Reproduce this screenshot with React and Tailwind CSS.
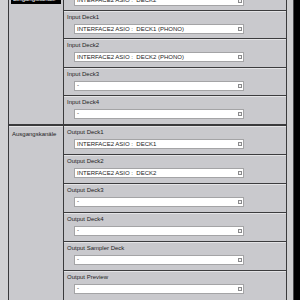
export default function App() {
  const inputRows = [
    { label: "Input Deck0", value: "INTERFACE2 ASIO :  DECK2" },
    { label: "Input Deck1", value: "INTERFACE2 ASIO :  DECK1 (PHONO)" },
    { label: "Input Deck2", value: "INTERFACE2 ASIO :  DECK2 (PHONO)" },
    { label: "Input Deck3", value: "-" },
    { label: "Input Deck4", value: "-" },
  ];
  const outputRows = [
    { label: "Output Deck1", value: "INTERFACE2 ASIO :  DECK1" },
    { label: "Output Deck2", value: "INTERFACE2 ASIO :  DECK2" },
    { label: "Output Deck3", value: "-" },
    { label: "Output Deck4", value: "-" },
    { label: "Output Sampler Deck", value: "-" },
    { label: "Output Preview", value: "-" },
  ];

  const Row = ({ label, value, last, h }) => (
    <div
      className={`flex flex-col pl-[3px] pt-[3px] shadow-[inset_0_1px_0_#e4e4e6] ${last ? "" : "border-b border-[#3c3c3e]"}`}
      style={{ height: h }}
    >
      <div className="text-[6px] leading-[7px] text-[#1e1e1e] whitespace-nowrap">{label}</div>
      <div className="mt-[3px] ml-[7px] w-[170px] h-[10px] bg-white border border-[#a4a4a6] flex items-center pl-[2px] pr-[1px]">
        <span className="flex-1 text-[6px] leading-[7px] text-[#1a1a1a] whitespace-pre">{value}</span>
        <span className="w-[4px] h-[4px] border border-[#8a8a8c] bg-[#f4f4f4]" />
      </div>
    </div>
  );

  return (
    <div className="w-[300px] h-[300px] overflow-hidden flex bg-[#c9c9cd] font-['Liberation_Sans',Arial,sans-serif]">
      <div className="w-[8px] shrink-0 bg-[#d1d1d3]" />
      <div className="w-[279px] shrink-0 flex flex-col border-l border-r border-[#3a3a3c]">
        {/* Input group */}
        <div className="flex mt-[-17.3px] border-b-2 border-[#3a3a3c]">
          <div className="w-[55px] shrink-0 border-r border-[#3a3a3c] pl-[2px]">
            <div className="mt-[12.3px] w-[50px] h-[9px] bg-black text-white text-[6px] leading-[7px] pl-[2px] pt-[1px] whitespace-nowrap">
              Eingangskanäle
            </div>
          </div>
          <div className="flex-1 flex flex-col">
            {inputRows.map((r, i) => (
              <Row key={i} {...r} h={i === 0 ? "28.3px" : "28.3px"} last={i === inputRows.length - 1} />
            ))}
          </div>
        </div>
        {/* Output group */}
        <div className="flex border-b-2 border-[#3a3a3c]">
          <div className="w-[55px] shrink-0 border-r border-[#3a3a3c] pl-[3px] pt-[5px] shadow-[inset_0_1px_0_#e4e4e6]">
            <div className="text-[6px] leading-[7px] text-[#1e1e1e] whitespace-nowrap">Ausgangskanäle</div>
          </div>
          <div className="flex-1 flex flex-col">
            {outputRows.map((r, i) => (
              <Row key={i} {...r} h="28.9px" last={i === outputRows.length - 1} />
            ))}
          </div>
        </div>
        <div className="flex-1" />
      </div>
      <div className="w-[6px] shrink-0 bg-[#cfcfd1]" />
      <div className="w-[1px] shrink-0 bg-[#4a4a4c]" />
      <div className="flex-1 bg-black" />
    </div>
  );
}
